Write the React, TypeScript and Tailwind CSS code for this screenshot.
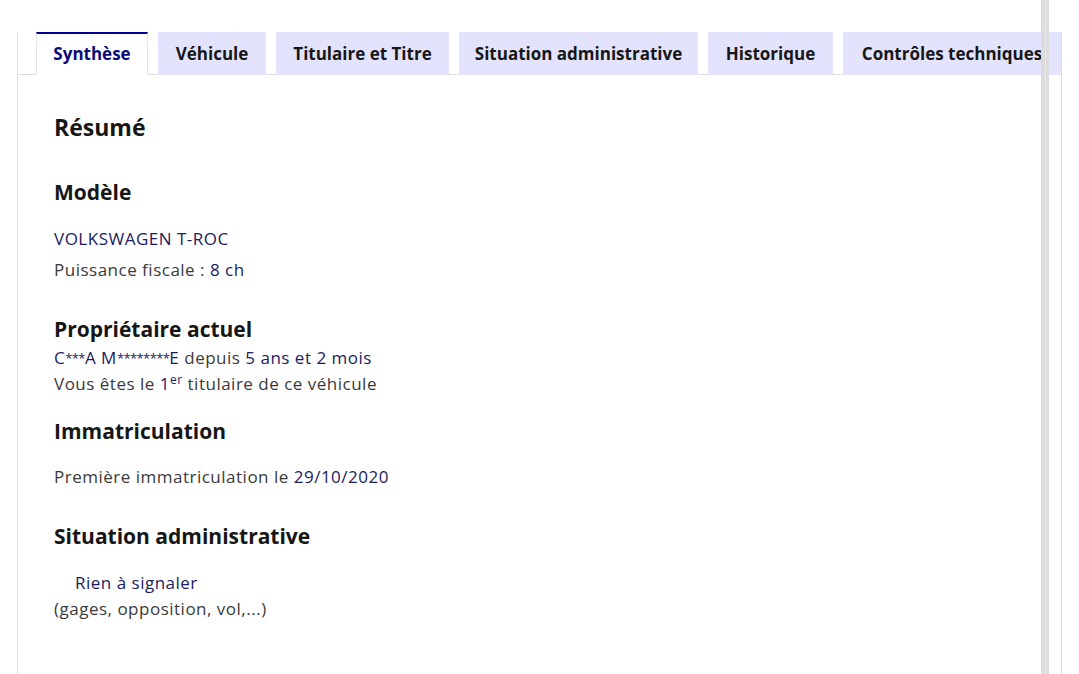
const tabs = [
  { label: "Synthèse", w: "w-[112px]", active: true },
  { label: "Véhicule", w: "w-[108px]" },
  { label: "Titulaire et Titre", w: "w-[173px]" },
  { label: "Situation administrative", w: "w-[239px]" },
  { label: "Historique", w: "w-[125px]" },
  { label: "Contrôles techniques", w: "w-[218px]" },
]

function Value({ children }: { children: React.ReactNode }) {
  return <span className="text-[#1b1b5e]">{children}</span>
}

// masked letters: small raised asterisks like the original font
function Stars({ n }: { n: number }) {
  return <span className="relative -top-[1px] text-[13px] leading-none tracking-[-0.6px]">{"*".repeat(n)}</span>
}

export default function App() {
  return (
    <div
      className="relative h-[674px] w-[1079px] overflow-hidden bg-white pt-[32px]"
      style={{ fontFamily: '"Open Sans", "Liberation Sans", sans-serif' }}
    >
      <div className="ml-[17px] flex h-[642px] w-[1045px] flex-col border-x border-[#dddddd]">
        {/* tab list */}
        <div className="relative flex h-[43px] shrink-0 gap-[10px] overflow-hidden pl-[18px]">
          <div className="absolute bottom-0 left-0 right-0 h-px bg-[#dddddd]" />
          {tabs.map((t) =>
            t.active ? (
              <div
                key={t.label}
                className={`relative z-10 flex ${t.w} shrink-0 items-center justify-center border-x border-[#e5e5e5] border-t-2 border-t-[#000091] bg-white pb-[1px] text-[17px] font-bold text-[#0a0a7a]`}
              >
                {t.label}
              </div>
            ) : (
              <div
                key={t.label}
                className={`relative flex ${t.w} shrink-0 items-center justify-center bg-[#e3e3fd] text-[17px] font-bold whitespace-nowrap text-[#161616]`}
              >
                {t.label}
              </div>
            )
          )}
        </div>

        {/* panel */}
        <div className="flex flex-col pl-[36px] pt-[36px] text-[17px] tracking-[0.5px] text-[#3a3a3a]">
          <h2 className="text-[23px] leading-[32px] font-bold tracking-normal text-[#161616]">Résumé</h2>

          <h3 className="mt-[35px] text-[21px] leading-[28px] font-bold tracking-normal text-[#161616]">Modèle</h3>
          <p className="mt-[21px] leading-[24px]">
            <Value>VOLKSWAGEN T-ROC</Value>
          </p>
          <p className="mt-[7px] leading-[24px]">
            Puissance fiscale : <Value>8 ch</Value>
          </p>

          <h3 className="mt-[33px] text-[21px] leading-[28px] font-bold tracking-normal text-[#161616]">
            Propriétaire actuel
          </h3>
          <p className="mt-[2px] h-[26px] leading-[26px]">
            <Value>
              C<Stars n={3} />A M<Stars n={8} />E
            </Value>{" "}
            depuis <Value>5 ans et 2 mois</Value>
          </p>
          <p className="h-[26px] leading-[26px]">
            Vous êtes le <Value>1</Value>
            <sup className="text-[12px] leading-none">
              <Value>er</Value>
            </sup>{" "}
            titulaire de ce véhicule
          </p>

          <h3 className="mt-[20px] text-[21px] leading-[28px] font-bold tracking-normal text-[#161616]">
            Immatriculation
          </h3>
          <p className="mt-[20px] leading-[24px]">
            Première immatriculation le <Value>29/10/2020</Value>
          </p>

          <h3 className="mt-[33px] text-[21px] leading-[28px] font-bold tracking-normal text-[#161616]">
            Situation administrative
          </h3>
          <p className="mt-[20px] pl-[21px] leading-[26px]">
            <Value>Rien à signaler</Value>
          </p>
          <p className="leading-[26px]">(gages, opposition, vol,...)</p>
        </div>
      </div>

      {/* overlay scroll divider */}
      <div className="absolute top-0 left-[1041px] flex h-full w-[8px]">
        <div className="w-[4px] bg-[#dcdcdc]" />
        <div className="w-[1px] bg-[#e8e8e8]" />
        <div className="w-[3px] bg-[#dcdcdc]" />
      </div>
    </div>
  )
}
